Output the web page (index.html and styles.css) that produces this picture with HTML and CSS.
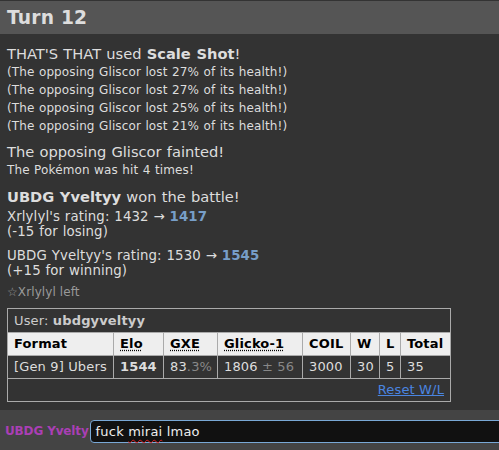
FILE: index.html
```html
<!DOCTYPE html>
<html>
<head>
<meta charset="utf-8">
<link rel="stylesheet" href="styles.css">
</head>
<body>
<div class="log">
  <h2 class="turn">Turn 12</h2>
  <div class="block b-move">
    <div class="line">THAT'S THAT used <strong>Scale Shot</strong>!</div>
    <div class="line small">(The opposing Gliscor lost 27% of its health!)</div>
    <div class="line small">(The opposing Gliscor lost 27% of its health!)</div>
    <div class="line small">(The opposing Gliscor lost 25% of its health!)</div>
    <div class="line small">(The opposing Gliscor lost 21% of its health!)</div>
  </div>
  <div class="block b-faint">
    <div class="line">The opposing Gliscor fainted!</div>
    <div class="line small">The Pokémon was hit 4 times!</div>
  </div>
  <div class="block b-win">
    <div class="line"><strong>UBDG Yveltyy</strong> won the battle!</div>
  </div>
  <div class="block rating r1">
    <div class="rline">Xrlylyl's rating: 1432 → <strong class="new">1417</strong></div>
    <div class="rline">(-15 for losing)</div>
  </div>
  <div class="block rating r2">
    <div class="rline">UBDG Yveltyy's rating: 1530 → <strong class="new">1545</strong></div>
    <div class="rline">(+15 for winning)</div>
  </div>
  <div class="block left">☆Xrlylyl left</div>
  <table class="ladder">
    <colgroup>
      <col class="c-format"><col class="c-elo"><col class="c-gxe"><col class="c-glicko">
      <col class="c-coil"><col class="c-w"><col class="c-l"><col class="c-total">
    </colgroup>
    <tr><th class="user" colspan="8">User: <strong>ubdgyveltyy</strong></th></tr>
    <tr class="head">
      <th>Format</th>
      <th><abbr>Elo</abbr></th>
      <th><abbr>GXE</abbr></th>
      <th><abbr>Glicko-1</abbr></th>
      <th>COIL</th>
      <th>W</th>
      <th>L</th>
      <th>Total</th>
    </tr>
    <tr>
      <td>[Gen 9] Ubers</td>
      <td><strong>1544</strong></td>
      <td>83<span class="dim">.3%</span></td>
      <td class="center">1806<span class="dim"> ± 56</span></td>
      <td>3000</td>
      <td>30</td>
      <td>5</td>
      <td>35</td>
    </tr>
    <tr><td class="reset" colspan="8"><a href="#">Reset W/L</a></td></tr>
  </table>
</div>
<div class="chatbar">
  <div class="name">UBDG Yvelty</div>
  <div class="input">fuck <span class="typo">mirai</span> lmao</div>
</div>
</body>
</html>
```
FILE: styles.css
```css
html, body {
  margin: 0;
  padding: 0;
  background: #333;
  overflow: hidden;
}
body {
  font-family: "DejaVu Sans", Verdana, sans-serif;
  color: #ddd;
  width: 499px;
  height: 450px;
}
.log {
  height: 410px;
  padding-top: 1px;
  box-sizing: border-box;
}
.turn {
  margin: 0;
  height: 33px;
  line-height: 33px;
  background: #555;
  font-size: 18.67px;
  font-weight: bold;
  color: #ddd;
  padding-left: 7px;
  letter-spacing: 0.2px;
}
.block {
  padding-left: 7px;
}
.line {
  font-size: 14.67px;
  line-height: 18px;
  word-spacing: 0.5px;
}
.line.small {
  font-size: 12px;
  letter-spacing: 0.12px;
  word-spacing: 0.5px;
}
.b-move { margin-top: 11px; }
.b-faint { margin-top: 8px; }
.b-win { margin-top: 9px; }
.rating {
  font-size: 13.33px;
  line-height: 15px;
  letter-spacing: 0.1px;
  word-spacing: 0.5px;
}
.r1 { margin-top: 3px; }
.r2 { margin-top: 9px; }
.new { color: #779ec8; }
.left {
  margin-top: 5px;
  font-size: 12px;
  line-height: 18px;
  color: #999;
  letter-spacing: 0.1px;
}
.ladder {
  margin: 7px 0 0 7px;
  border-collapse: collapse;
  table-layout: fixed;
  width: 443px;
  font-size: 13px;
  letter-spacing: 0.15px;
  border: 1px solid #aaa;
}
.c-format { width: 106px; }
.c-elo { width: 50px; }
.c-gxe { width: 54px; }
.c-glicko { width: 85px; }
.c-coil { width: 48px; }
.c-w { width: 29px; }
.c-l { width: 21px; }
.c-total { width: 50px; }
.ladder th, .ladder td {
  border: 1px solid #aaa;
  padding: 3px 6px;
  line-height: 16px;
  text-align: left;
  white-space: nowrap;
  overflow: hidden;
}
.ladder th.user {
  font-weight: normal;
  color: #ccc;
  padding-top: 4px;
}
.ladder .head th {
  background: #eee;
  color: #000;
}
.ladder abbr {
  text-decoration: underline dotted;
  text-underline-offset: 2px;
}
.dim { color: #888; }
.center { text-align: center; }
.ladder td.reset {
  text-align: right;
}
.reset a {
  color: #4a85e0;
}
.chatbar {
  height: 40px;
  background: #444;
  display: flex;
  align-items: center;
  overflow: hidden;
  padding-left: 5px;
}
.name {
  flex: none;
  white-space: nowrap;
  font-size: 12px;
  letter-spacing: -0.15px;
  font-weight: bold;
  color: #aa3fb5;
  margin-top: 2px;
}
.input {
  flex: none;
  margin-left: 1px;
  width: 480px;
  height: 21px;
  line-height: 21px;
  margin-top: 2px;
  background: #111;
  border: 1px solid #79a8d6;
  border-radius: 4px;
  padding-left: 5px;
  font-size: 13px;
  letter-spacing: 0.2px;
  color: #eee;
}
.typo {
  text-decoration: underline wavy #e02020;
  text-decoration-thickness: 1px;
  text-underline-offset: 3px;
}
```
